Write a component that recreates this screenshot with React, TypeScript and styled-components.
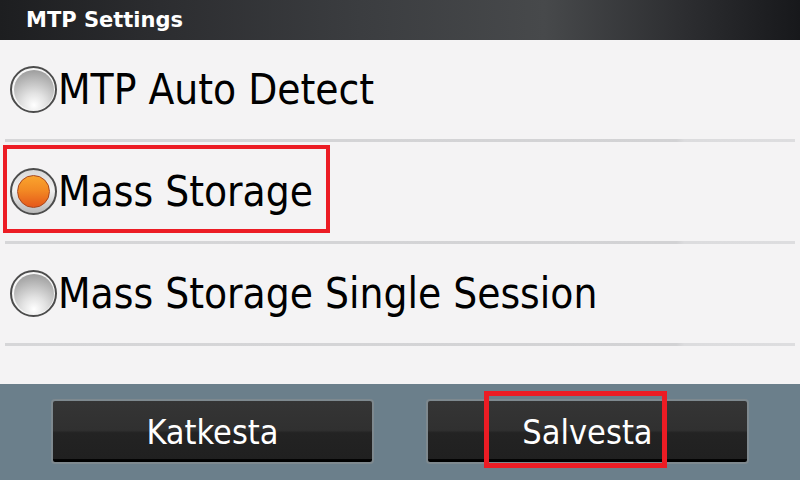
import React from "react";
import styled, { createGlobalStyle, css } from "styled-components";

const Global = createGlobalStyle`
  html, body { margin: 0; padding: 0; background: #f4f3f4; }
  body { font-family: "DejaVu Sans", "Liberation Sans", sans-serif; }
  * { box-sizing: border-box; }
`;

const Screen = styled.div`
  position: relative;
  width: 800px;
  height: 480px;
  display: flex;
  flex-direction: column;
  overflow: hidden;
  background: #f4f3f4;
`;

const TitleBar = styled.div`
  height: 40px;
  flex: none;
  display: flex;
  align-items: center;
  padding-left: 26px;
  background: linear-gradient(
    90deg,
    #1d1e20 0%,
    #2c2d30 20%,
    #3b3d40 45%,
    #47494b 68%,
    #2c2d30 86%,
    #17181b 100%
  );
`;

const Title = styled.h1`
  margin: 0;
  font-family: "DejaVu Sans", sans-serif;
  font-weight: bold;
  font-size: 21px;
  color: #ffffff;
`;

const List = styled.div`
  flex: 1;
  display: flex;
  flex-direction: column;
`;

const Row = styled.div`
  height: 99px;
  display: flex;
  align-items: center;
  padding-left: 10px;
  gap: 1px;
`;

const Separator = styled.div`
  height: 3px;
  margin: 0 5px;
  background: linear-gradient(90deg, #d6d6d8 0%, #d2d2d4 85%, #dcdcde 86%, #dddddf 100%);
`;

const Radio = styled.div<{ $checked?: boolean }>`
  width: 47px;
  height: 47px;
  flex: none;
  border-radius: 50%;
  border: 2px solid #4c4c4c;
  display: flex;
  align-items: center;
  justify-content: center;
  ${(p) =>
    p.$checked
      ? css`
          background: linear-gradient(180deg, #d8d8d8 0%, #f2f2f2 45%, #b8b8b8 100%);
        `
      : css`
          background: #f6f6f6;
        `}
`;

const RadioDot = styled.div<{ $checked?: boolean }>`
  border-radius: 50%;
  ${(p) =>
    p.$checked
      ? css`
          width: 33px;
          height: 33px;
          border: 1.5px solid #a8461c;
          background: linear-gradient(180deg, #f9a42e 0%, #f38a24 45%, #e5581a 100%);
        `
      : css`
          width: 40px;
          height: 40px;
          background: radial-gradient(circle at 50% 88%, #ffffff 0%, #e2e2e2 30%, #b8b8b8 65%, #8e8e8e 100%);
        `}
`;

const Label = styled.span`
  font-family: "DejaVu Sans Condensed", "DejaVu Sans", sans-serif;
  font-size: 42px;
  color: #000000;
  white-space: nowrap;
`;

const Footer = styled.div`
  height: 96px;
  flex: none;
  background: #6b7f8b;
  display: flex;
  align-items: flex-start;
  padding: 15px 51px 0;
  gap: 52px;
`;

const Button = styled.button`
  flex: 1;
  height: 65px;
  padding: 0;
  border: 2px solid #7e898f;
  border-radius: 4px;
  background: linear-gradient(180deg, #353535 0%, #303030 48%, #232323 52%, #202020 95%, #000 96%, #000 100%);
  color: #ffffff;
  font-family: "DejaVu Sans Condensed", "DejaVu Sans", sans-serif;
  font-size: 34px;
  display: flex;
  align-items: center;
  justify-content: center;
`;

const Highlight = styled.div<{ $x: number; $y: number; $w: number; $h: number; $b: number }>`
  position: absolute;
  left: ${(p) => p.$x}px;
  top: ${(p) => p.$y}px;
  width: ${(p) => p.$w}px;
  height: ${(p) => p.$h}px;
  border: ${(p) => p.$b}px solid #ec1c24;
  pointer-events: none;
`;

const options = [
  { label: "MTP Auto Detect", checked: false },
  { label: "Mass Storage", checked: true },
  { label: "Mass Storage Single Session", checked: false },
];

export default function App() {
  return (
    <>
      <Global />
      <Screen>
        <TitleBar>
          <Title>MTP Settings</Title>
        </TitleBar>
        <List>
          {options.map((o) => (
            <React.Fragment key={o.label}>
              <Row>
                <Radio $checked={o.checked}>
                  <RadioDot $checked={o.checked} />
                </Radio>
                <Label>{o.label}</Label>
              </Row>
              <Separator />
            </React.Fragment>
          ))}
        </List>
        <Footer>
          <Button>Katkesta</Button>
          <Button>Salvesta</Button>
        </Footer>
        <Highlight $x={3} $y={145} $w={327} $h={88} $b={4} />
        <Highlight $x={484} $y={391} $w={183} $h={77} $b={5} />
      </Screen>
    </>
  );
}
